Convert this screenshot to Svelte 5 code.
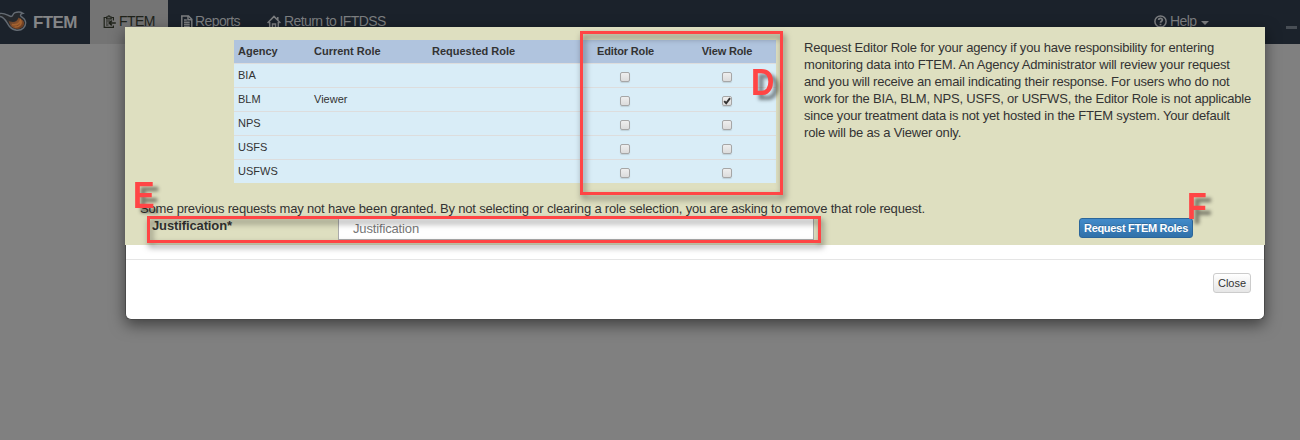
<script>
  const rows = [
    { agency: 'BIA', current: '', view: false },
    { agency: 'BLM', current: 'Viewer', view: true },
    { agency: 'NPS', current: '', view: false },
    { agency: 'USFS', current: '', view: false },
    { agency: 'USFWS', current: '', view: false }
  ];
  const help = [
    'Request Editor Role for your agency if you have responsibility for entering',
    'monitoring data into FTEM. An Agency Administrator will review your request',
    'and you will receive an email indicating their response. For users who do not',
    'work for the BIA, BLM, NPS, USFS, or USFWS, the Editor Role is not applicable',
    'since your treatment data is not yet hosted in the FTEM system. Your default',
    'role will be as a Viewer only.'
  ];
</script>

{#snippet box(checked)}
  <span class="check">
    {#if checked}
      <svg viewBox="0 0 10 10" width="8" height="8"><path d="M1.5 5.2 4 7.8 8.8 1.5" fill="none" stroke="#333" stroke-width="2.4" /></svg>
    {/if}
  </span>
{/snippet}

<div class="page">
  <nav>
    <div class="brand">
      <svg width="27" height="24" viewBox="0 0 27 24">
        <defs>
          <linearGradient id="flame" x1="0" y1="0" x2="1" y2="1">
            <stop offset="0" stop-color="#40332d" />
            <stop offset=".5" stop-color="#87502b" />
            <stop offset="1" stop-color="#5b321c" />
          </linearGradient>
        </defs>
        <path d="M0 3.5C5 2.5 8 6 11 6.5C13.5 6.5 12 4 15 2.7C18 1.5 21 2 23 3.3C20 3.8 19.5 6 22.5 7.5C26.5 10 26.5 15 23.5 18C20 21.5 13 21 9.5 16.5C6.5 12.5 5 7 0 6.5" fill="#25282c" stroke="#646b73" stroke-width="1.4" />
        <path d="M8.5 10.5C12 13 17 12.5 18.5 7.5C20 9 25 10 24 14.5C22.5 20 14 20.5 10.5 15.5C9.5 14 9 12.5 8.5 10.5Z" fill="url(#flame)" />
        <path d="M12 14.5C16.5 15.5 20 13.5 20.5 10.5C22.5 14 19 17.5 14.5 17" fill="none" stroke="#a4622f" stroke-width="1.6" />
      </svg>
      <span>FTEM</span>
    </div>
    <div class="item active">
      <svg width="13" height="14" viewBox="0 0 13 14" fill="none" stroke="#20231b" stroke-width="1.2">
        <path d="M3 2.5H1.2V12.4H10.4V10.6M8.6 2.5H10.4V5.4" />
        <path d="M3.6 3.8V2H4.8C4.8.4 7 .4 7 2H8.2V3.8Z" />
        <path d="M3 6H7M3 8H4.6M3 10H5.5" />
        <path d="M12.8 8H6.4M8.8 5.6 6.2 8 8.8 10.4" stroke-width="1.6" />
      </svg>
      <span>FTEM</span>
    </div>
    <div class="item reports">
      <svg width="12" height="14" viewBox="0 0 12 14" fill="none" stroke="#7c7e80" stroke-width="1.5">
        <path d="M.8 1H7.5L10.8 4.2V13H.8Z" /><path d="M7 1V4.7H11M3 5H5.8M3 7.3H8.7M3 9.3H8.7M3 11.2H8.7" />
      </svg>
      <span>Reports</span>
    </div>
    <div class="item home">
      <svg width="14" height="14" viewBox="0 0 14 14" fill="none" stroke="#7c7e80" stroke-width="1.5">
        <path d="M.6 8 7 1.4 13.4 8M2.7 7V13H5.5V9H8.5V13H11.3V7M10.8 5V2" />
      </svg>
      <span>Return to IFTDSS</span>
    </div>
    <div class="item help-menu">
      <svg width="13" height="13" viewBox="0 0 13 13" fill="none" stroke="#7c7e80">
        <circle cx="6.5" cy="6.5" r="5.6" stroke-width="1.5" />
        <path d="M4.6 5C4.8 2.8 8.5 3 8.3 5C8.2 6.2 6.6 6.2 6.5 7.7M6.5 8.7V10.2" stroke-width="1.8" />
      </svg>
      <span>Help</span>
      <i class="caret"></i>
    </div>
    <i class="dash"></i>
  </nav>

  <section class="modal">
    <div class="body">
      <div class="top">
        <div class="table">
          <div class="tr head">
            <span>Agency</span><span>Current Role</span><span>Requested Role</span><span class="mid">Editor Role</span><span class="mid">View Role</span>
          </div>
          {#each rows as row}
            <div class="tr">
              <span>{row.agency}</span><span>{row.current}</span><span></span>
              <span class="mid">{@render box(false)}</span>
              <span class="mid">{@render box(row.view)}</span>
            </div>
          {/each}
        </div>
        <div class="info">
          {#each help as line}<div>{line}</div>{/each}
        </div>
      </div>
      <div class="note">Some previous requests may not have been granted. By not selecting or clearing a role selection, you are asking to remove that role request.</div>
      <div class="form">
        <b>Justification*</b>
        <div class="input">Justification</div>
        <button class="primary">Request FTEM Roles</button>
      </div>
    </div>
    <div class="footer"><button class="close">Close</button></div>
  </section>

  <div class="frame roles"></div>
  <div class="frame reason"></div>
  <span class="mark d">D</span>
  <span class="mark e">E</span>
  <span class="mark f">F</span>
</div>

<style>
  :global(body) { margin: 0; background: #808080; overflow: hidden; }
  .page { position: relative; width: 1300px; height: 440px; overflow: hidden; background: #808080; font-family: 'Liberation Sans', Arial, sans-serif; color: #333; }
  nav { display: flex; height: 44px; background: #1b222b; color: #7c7e80; font-size: 14px; line-height: 16px; white-space: nowrap; }
  nav svg { flex: none; display: block; }
  .brand { width: 90px; display: flex; padding-top: 10px; box-sizing: border-box; font-size: 17px; letter-spacing: -.6px; font-weight: bold; line-height: 25px; color: #858688; }
  .brand span { margin-left: 6px; }
  .item { display: flex; align-items: flex-start; padding-top: 13px; box-sizing: border-box; letter-spacing: -.6px; }
  .item svg { margin-right: 3px; margin-top: 2px; }
  .active { width: 78px; padding-left: 13px; background: #747474; color: #20231b; }
  .reports { padding-left: 13px; width: 99px; }
  .reports svg { margin-right: 2px; }
  .home { width: 887px; }
  .help-menu { width: 132px; }
  .caret { border: 4px solid transparent; border-top-color: #7c7e80; border-bottom: 0; margin: 8px 0 0 5px; }
  .dash { width: 11px; height: 3px; background: #484e55; margin: 26px 0 0 0; }
  .modal { position: absolute; left: 125px; top: 27px; width: 1140px; height: 293px; box-sizing: border-box; border: 1px solid #4a4a4a; border-top: 0; border-radius: 0 0 6px 6px; background: #fff; box-shadow: 0 5px 15px rgba(0, 0, 0, .5); }
  .body { height: 218px; margin: 0 -1px; background: #dedfc0; padding: 13px 0 0 15px; box-sizing: border-box; }
  .top { display: flex; margin-left: 94px; height: 160px; }
  .table { width: 542px; font-size: 11px; line-height: 14px; }
  .tr { display: grid; grid-template-columns: 76px 118px 145px 104px 99px; height: 24px; box-sizing: border-box; border-top: 1px solid #ddd; background: #d9edf7; }
  .tr > span { padding: 4px 0 0 4px; white-space: nowrap; }
  .tr > .mid { padding-left: 0; text-align: center; }
  .head { height: 23px; border: 0; background: #b0c4de; font-weight: bold; }
  .head .mid { letter-spacing: -.15px; padding-left: 1px !important; }
  .check { display: flex; align-items: center; justify-content: center; width: 10px; height: 10px; box-sizing: border-box; margin: 4px auto 0; border: 1px solid #a6a6a6; border-radius: 2px; background: linear-gradient(#eee, #dcdcdc); box-shadow: 0 1px 1px rgba(0, 0, 0, .12); }
  .check svg { flex: none; }
  .info { margin: -1px 0 0 28px; font-size: 13px; letter-spacing: -.19px; line-height: 17px; white-space: nowrap; }
  .note { font-size: 13px; letter-spacing: -.185px; line-height: 17px; white-space: nowrap; }
  .form { display: flex; height: 28px; margin-left: 12px; }
  .form b { width: 186px; font-size: 13px; letter-spacing: -.12px; line-height: 18px; }
  .input { width: 476px; height: 23px; box-sizing: border-box; border: 1px solid #aaa; background: #fff; color: #777; font-size: 13px; letter-spacing: -.15px; line-height: 21px; padding-left: 14px; }
  button { font: 11px/16px 'Liberation Sans', Arial, sans-serif; padding: 0; box-sizing: border-box; border-radius: 3px; height: 20px; }
  .primary { margin: 1px 0 0 265px; width: 114px; border: 1px solid #2b669a; color: #fff; font-weight: bold; letter-spacing: -.3px; background: linear-gradient(#428bca, #3071a9); text-shadow: 0 -1px 0 rgba(0, 0, 0, .2); }
  .footer { display: flex; justify-content: flex-end; border-top: 1px solid #e5e5e5; margin-top: 14px; padding: 13px 13px 0; }
  .close { width: 38px; border: 1px solid #ccc; color: #333; background: linear-gradient(#fff, #e6e6e6); }
  .frame { position: absolute; border: 3px solid #ff4545; box-sizing: border-box; filter: drop-shadow(2px 4px 3px rgba(0, 0, 0, .5)); }
  .roles { left: 580px; top: 31px; width: 203px; height: 164px; }
  .reason { left: 147px; top: 216px; width: 674px; height: 27px; }
  .mark { position: absolute; font-size: 36px; line-height: 36px; font-weight: bold; color: #ff4545; text-shadow: 6px 5px 4px rgba(0, 0, 0, .45); transform: scaleX(.9); transform-origin: left; }
  .d { left: 751px; top: 65px; }
  .e { left: 133px; top: 178px; }
  .f { left: 1187px; top: 189px; }
</style>
